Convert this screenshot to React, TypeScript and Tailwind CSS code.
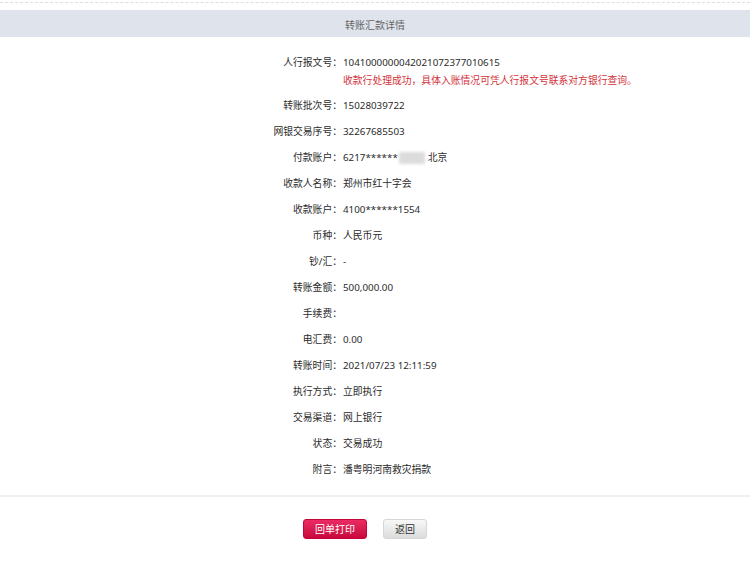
import React from "react";

const rows: { label: string; value: React.ReactNode }[] = [
  { label: "转账批次号", value: "15028039722" },
  { label: "网银交易序号", value: "32267685503" },
  {
    label: "付款账户",
    value: (
      <span className="inline-flex items-center">
        6217******
        <span className="inline-block w-[26px] h-[12px] ml-[1px] mr-[3px] bg-[#dcdcdc] blur-[1.5px]" />
        北京
      </span>
    ),
  },
  { label: "收款人名称", value: "郑州市红十字会" },
  { label: "收款账户", value: "4100******1554" },
  { label: "币种", value: "人民币元" },
  { label: "钞/汇", value: "-" },
  { label: "转账金额", value: "500,000.00" },
  { label: "手续费", value: "" },
  { label: "电汇费", value: "0.00" },
  { label: "转账时间", value: "2021/07/23 12:11:59" },
  { label: "执行方式", value: "立即执行" },
  { label: "交易渠道", value: "网上银行" },
  { label: "状态", value: "交易成功" },
  { label: "附言", value: "潘粤明河南救灾捐款" },
];

export default function App() {
  return (
    <div
      className="w-[750px] h-[564px] bg-white text-[#2b2b2b] text-[9.8px] overflow-hidden"
      style={{ fontFamily: '"Noto Sans", "Noto Sans CJK SC", sans-serif' }}
    >
      <div className="pt-[2px]">
        <div className="border-t border-dashed border-[#dedede]" />
      </div>
      <div className="mt-[7px] h-[27px] pt-[3px] bg-[#dfe4ec] flex items-center justify-center text-[#666] text-[10px]">
        转账汇款详情
      </div>
      <div className="mt-[13px] grid grid-cols-[342px_1fr]">
        <div className="text-right pt-[4px] leading-[18px]">人行报文号：</div>
        <div className="pl-[1px] pt-[4px] pb-[3px] leading-[18px]">
          <div>1041000000042021072377010615</div>
          <div className="text-[#d3323a]">收款行处理成功，具体入账情况可凭人行报文号联系对方银行查询。</div>
        </div>
        {rows.map((r) => (
          <React.Fragment key={r.label}>
            <div className="text-right leading-[26px] h-[26px]">{r.label}：</div>
            <div className="pl-[1px] leading-[26px] h-[26px]">{r.value}</div>
          </React.Fragment>
        ))}
      </div>
      <div className="mt-[12px] border-t-2 border-[#f0f0f0]" />
      <div className="mt-[22px] flex justify-center gap-[16px] pr-[20px]">
        <button className="w-[64px] h-[20px] rounded-[3px] bg-gradient-to-b from-[#ea2b63] to-[#c8053d] text-white text-[10px] leading-[18px] border border-[#c2043a]">
          回单打印
        </button>
        <button className="w-[44px] h-[20px] rounded-[3px] bg-gradient-to-b from-[#f8f8f8] to-[#dcdcdc] text-[#333] text-[10px] leading-[18px] border border-[#d6d6d6]">
          返回
        </button>
      </div>
    </div>
  );
}
